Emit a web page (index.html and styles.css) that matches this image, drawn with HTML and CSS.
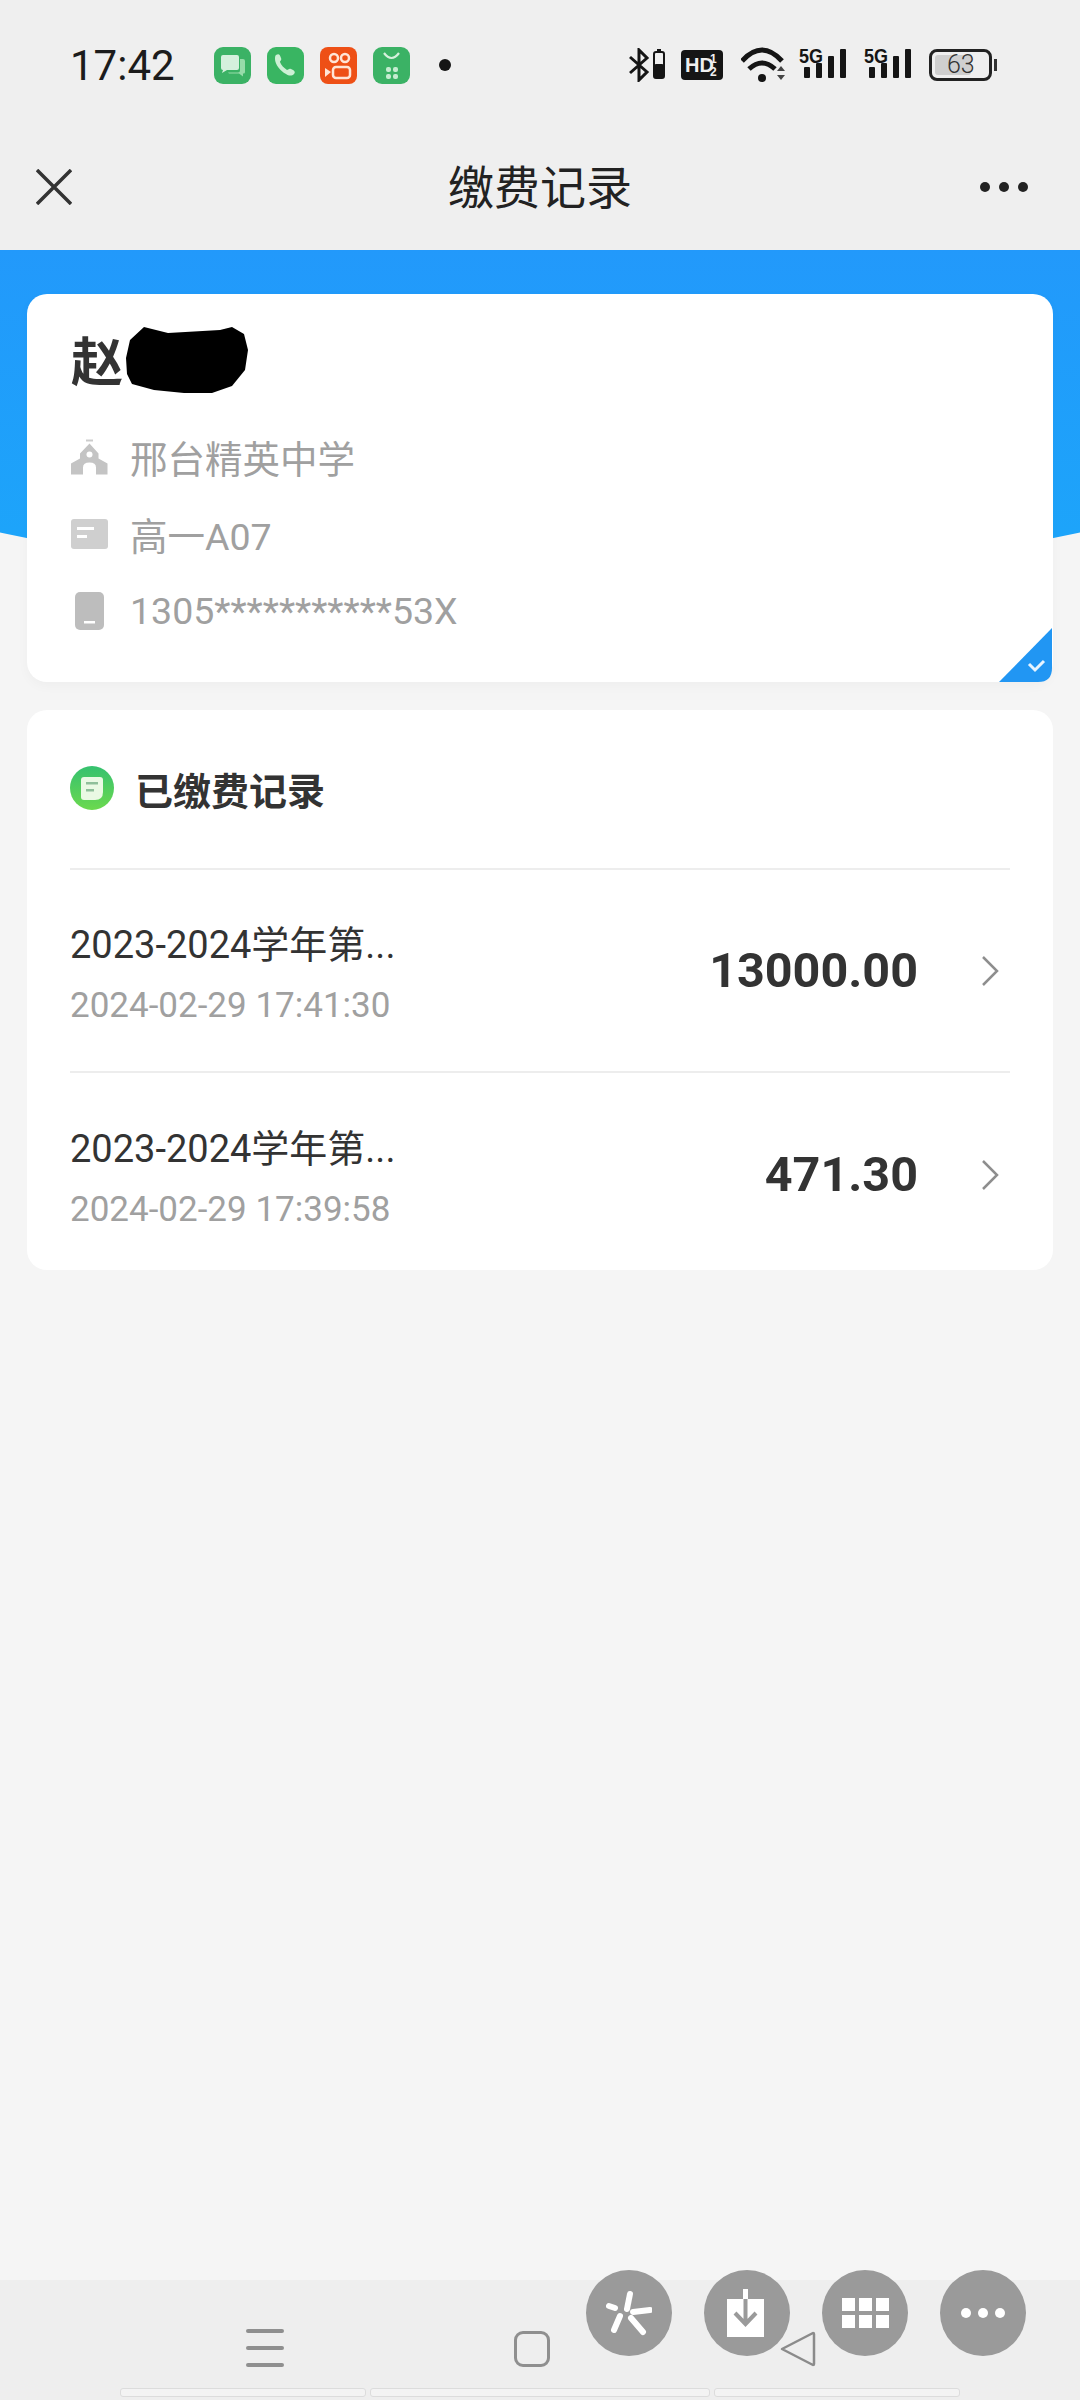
FILE: index.html
```html
<!DOCTYPE html>
<html lang="zh-CN">
<head>
  <meta charset="UTF-8">
  <meta name="viewport" content="width=device-width, initial-scale=1.0">
  <title>缴费记录</title>
  <link rel="stylesheet" href="styles.css">
</head>
<body>
  <div class="phone">
    <header class="topbar">
      <div class="status">
        <span class="time">17:42</span>
        <div class="apps">
          <svg class="app" viewBox="0 0 37 37"><rect width="37" height="37" rx="9" fill="#3bb265"/><path d="M7 10q0-2 2-2h14q2 0 2 2v11q0 2-2 2H13l-5 3 1-3q-2 0-2-2z" fill="#d5f0dc"/><path d="M26 12h3q2 0 2 2v11q0 2-2 1.500v3l-4-3H15l-1-1h10q2 0 2-2z" fill="#97dcaa"/></svg>
          <svg class="app" viewBox="0 0 37 37"><rect width="37" height="37" rx="9" fill="#39b562"/><path d="M9 8c3-2 4 0 5 3 1 2-1 3-1 4 1 3 4 6 7 8 1 0 2-2 4-1 3 1 5 3 3 5-2 2-5 2-8 0C13 24 8 17 8 12c0-2 0-3 1-4z" fill="#cdf0d5"/></svg>
          <svg class="app" viewBox="0 0 37 37"><rect width="37" height="37" rx="8" fill="#ee5016"/><g fill="none" stroke="#ffe5d6" stroke-width="2.500"><circle cx="14" cy="11" r="4"/><circle cx="25" cy="11" r="4"/><rect x="13" y="20" width="17" height="11" rx="3"/></g><path d="M5 21l6 4-6 5z" fill="#ffe5d6"/></svg>
          <svg class="app" viewBox="0 0 37 37"><rect width="37" height="37" rx="9" fill="#3bb265"/><path d="M11 6q7.500 10 15 0" fill="none" stroke="#d5f0dc" stroke-width="2.200"/><g fill="#c5ecd0"><rect x="13" y="20" width="5" height="5" rx="2"/><rect x="20" y="20" width="5" height="5" rx="2"/><rect x="13" y="27" width="5" height="5" rx="2"/><rect x="20" y="27" width="5" height="5" rx="2"/></g></svg>
          <span class="dot"></span>
        </div>
        <div class="sys">
          <svg width="36" height="34" viewBox="0 0 36 34"><path d="M1 9l17 15-8 8V2l8 8L1 25" fill="none" stroke="#151515" stroke-width="3"/><rect x="25" y="4" width="10" height="26" rx="2" fill="none" stroke="#151515" stroke-width="2"/><rect x="25" y="16" width="10" height="14" rx="2" fill="#151515"/><rect x="28" y="1" width="4" height="3" fill="#151515"/></svg>
          <svg class="hd" width="42" height="30" viewBox="0 0 42 30"><rect width="42" height="30" rx="4" fill="#151515"/><text x="4" y="22" class="hd-text">HD</text><text x="29" y="13" class="hd-small">1</text><text x="29" y="26" class="hd-small">2</text></svg>
          <svg class="wifi" width="46" height="36" viewBox="0 0 46 36"><g fill="none" stroke="#151515" stroke-width="5"><path d="M1 14q20-22 40 0"/><path d="M8 22q13-12 26 0"/></g><circle cx="21" cy="31" r="4" fill="#151515"/><path d="M36 24l4-5 4 5zM36 28l4 5 4-5z" fill="#444"/></svg>
          <svg width="48" height="42" viewBox="0 -4 48 42"><text x="0" y="15" class="sig-text" textLength="24" lengthAdjust="spacingAndGlyphs">5G</text><g fill="#151515"><rect x="5" y="19" width="6" height="11" rx="1"/><rect x="17" y="15" width="6" height="15" rx="1"/><rect x="29" y="8" width="6" height="22" rx="1"/><rect x="41" y="1" width="6" height="29" rx="1"/></g></svg>
          <svg class="sig2" width="48" height="42" viewBox="0 -4 48 42"><text x="0" y="15" class="sig-text" textLength="24" lengthAdjust="spacingAndGlyphs">5G</text><g fill="#151515"><rect x="5" y="19" width="6" height="11" rx="1"/><rect x="17" y="15" width="6" height="15" rx="1"/><rect x="29" y="8" width="6" height="22" rx="1"/><rect x="41" y="1" width="6" height="29" rx="1"/></g></svg>
          <div class="battery"><span class="level"></span><span class="pct">63</span></div>
          <span class="nib"></span>
        </div>
      </div>
      <nav class="titlebar">
        <svg class="close" viewBox="0 0 36 36"><path d="M1 1l34 34M35 1L1 35" stroke="#333" stroke-width="3.500" fill="none"/></svg>
        <h1>缴费记录</h1>
        <div class="more"><i></i><i></i><i></i></div>
      </nav>
    </header>

    <main class="content">
      <section class="card student">
        <div class="name-row">
          <span class="name">赵</span>
          <svg class="scribble" width="124" height="68" viewBox="0 0 124 68"><path d="M2 32L6 14 20 1 44 7 96 4 108 1 120 8 124 24 121 44 108 60 88 67 60 67 30 64 8 58 3 48z" fill="#000"/></svg>
        </div>
        <div class="info">
          <svg class="info-icon" viewBox="0 0 37 37"><path d="M15 1h7v2h-7z" fill="#ccc"/><path d="M18.500 5l9 10v5l9 5v11H25v-7q0-5-6.500-5T12 29v7H0V25l9-5v-5z" fill="#c4c4c4"/><circle cx="18.500" cy="16" r="3" fill="#fff"/></svg>
          <span>邢台精英中学</span>
        </div>
        <div class="info">
          <svg class="info-icon" viewBox="0 0 37 30"><rect width="37" height="30" rx="3" fill="#cfcfcf"/><rect x="6" y="8" width="17" height="3" fill="#fff"/><rect x="6" y="16" width="10" height="3" fill="#fff"/></svg>
          <span>高一A07</span>
        </div>
        <div class="info">
          <svg class="info-icon" viewBox="0 0 37 38"><rect x="4" y="0" width="29" height="38" rx="5" fill="#bdbdbd"/><rect x="13" y="29" width="11" height="2.500" fill="#fff"/></svg>
          <span>1305***********53X</span>
        </div>
        <svg class="verified" width="54" height="54" viewBox="0 0 54 54"><path d="M53 0v40q0 14-14 14H0z" fill="#2196f3"/><path d="M30 36l6 6 9-9" fill="none" stroke="#e6f4ff" stroke-width="3"/></svg>
      </section>

      <section class="card records">
        <div class="records-head">
          <svg class="head-icon" width="44" height="44" viewBox="0 0 44 44"><defs><linearGradient id="g" x1="0" y1="0" x2="0" y2="1"><stop offset="0" stop-color="#35c16f"/><stop offset="1" stop-color="#6bd94e"/></linearGradient></defs><circle cx="22" cy="22" r="22" fill="url(#g)"/><path d="M14 11h16q3 0 3 3v12q0 8-8 8H14q-3 0-3-3V14q0-3 3-3z" fill="#eaf9e4"/><rect x="16" y="16" width="12" height="2.500" fill="#8fbf9a"/><rect x="16" y="23" width="8" height="2.500" fill="#8fbf9a"/></svg>
          <h2>已缴费记录</h2>
        </div>
        <div class="row">
          <div class="row-text">
            <div class="row-title">2023-2024学年第...</div>
            <div class="row-date">2024-02-29 17:41:30</div>
          </div>
          <div class="amount">13000.00</div>
          <svg class="chevron" width="18" height="30" viewBox="0 0 18 30"><path d="M2 1l14 14L2 29" fill="none" stroke="#8e8e8e" stroke-width="2.500"/></svg>
        </div>
        <div class="row">
          <div class="row-text">
            <div class="row-title">2023-2024学年第...</div>
            <div class="row-date">2024-02-29 17:39:58</div>
          </div>
          <div class="amount">471.30</div>
          <svg class="chevron" width="18" height="30" viewBox="0 0 18 30"><path d="M2 1l14 14L2 29" fill="none" stroke="#8e8e8e" stroke-width="2.500"/></svg>
        </div>
      </section>
    </main>

    <footer class="bottom">
      <div class="softkeys">
        <div class="menu-key"><i></i><i></i><i></i></div>
        <span class="home-key"></span>
        <svg class="back-key" width="36" height="36" viewBox="0 0 36 36"><path d="M2 18L33 2q1 0 1 1v30q0 1-1 1z" fill="none" stroke="#8b8b8b" stroke-width="2.500" stroke-linejoin="round"/></svg>
      </div>
      <div class="tabs"><span class="tab t1"></span><span class="tab t2"></span><span class="tab t3"></span></div>

      <!-- floating tools sit over the soft keys -->
      <div class="tools">
        <span class="tool">
          <svg width="46" height="46" viewBox="0 0 46 46"><g stroke="#fff" stroke-linecap="round" fill="none"><path d="M21 19l3-15" stroke-width="6"/><path d="M27 22l17-2" stroke-width="6"/><path d="M3 16l6 2" stroke-width="6"/><path d="M14 26l-6 14" stroke-width="6"/><path d="M25 28l12 14" stroke-width="6"/></g></svg>
        </span>
        <span class="tool">
          <svg width="40" height="48" viewBox="0 0 40 48"><rect y="10" width="37" height="38" fill="#fff"/><path d="M16 0h5v12h-5z" fill="#fff"/><path d="M18.500 10v22M8 24l10.500 11L29 24" fill="none" stroke="#9a9a9a" stroke-width="4"/></svg>
        </span>
        <span class="tool">
          <div class="grid-icon"><i></i><i></i><i></i><i></i><i></i><i></i></div>
        </span>
        <span class="tool">
          <div class="tool-dots"><i></i><i></i><i></i></div>
        </span>
      </div>
    </footer>
  </div>
</body>
</html>
```

FILE: styles.css
```css
* {
  box-sizing: border-box;
}
body {
  margin: 0;
  font-family: Roboto, "Noto Sans CJK SC", sans-serif;
  color: #333;
}
.phone {
  width: 1080px;
  height: 2400px;
  display: flex;
  flex-direction: column;
  background: #f5f5f5;
  overflow: hidden;
}

/* top area */
.topbar {
  height: 250px;
  background: #efefef;
}
.status {
  height: 130px;
  display: flex;
  align-items: center;
  padding-left: 70px;
}
.time {
  font-size: 42px;
  color: #1c1c1c;
  width: 144px;
}
.apps {
  display: flex;
  align-items: center;
  gap: 16px;
}
.app {
  width: 37px;
  height: 37px;
}
.dot {
  width: 12px;
  height: 12px;
  border-radius: 50%;
  background: #151515;
  margin-left: 13px;
}
.sys {
  display: flex;
  align-items: center;
  margin-left: 178px;
}
.hd {
  margin-left: 16px;
}
.wifi {
  margin-left: 18px;
}
.wifi + svg {
  margin-left: 12px;
}
.sig2 {
  margin-left: 17px;
}
.hd-text {
  font: 700 20px "Liberation Sans", sans-serif;
  fill: #efefef;
}
.hd-small {
  font: 700 12px "Liberation Sans", sans-serif;
  fill: #efefef;
}
.sig-text {
  font: 700 20px "Liberation Sans", sans-serif;
  fill: #151515;
}
.battery {
  position: relative;
  width: 63px;
  height: 32px;
  margin-left: 17px;
  border: 3px solid #222;
  border-radius: 8px;
  padding: 3px;
  display: flex;
}
.level {
  width: 36px;
  background: #cfcfcf;
  border-radius: 3px;
}
.pct {
  position: absolute;
  left: 15px;
  top: -3px;
  font-size: 25px;
  line-height: 32px;
  font-weight: 300;
  color: #333;
}
.nib {
  width: 3px;
  height: 12px;
  margin-left: 2px;
  background: #333;
}
.titlebar {
  height: 120px;
  display: flex;
  align-items: center;
  justify-content: space-between;
  padding: 0 52px 6px 36px;
  position: relative;
}
.close {
  width: 36px;
  height: 36px;
}
.titlebar h1 {
  position: absolute;
  left: 0;
  right: 0;
  margin: 0 0 6px;
  text-align: center;
  font-size: 46px;
  font-weight: 400;
  color: #222;
}
.more {
  display: flex;
  gap: 9px;
}
.more i {
  width: 10px;
  height: 10px;
  border-radius: 50%;
  background: #222;
}

/* main */
.content {
  flex: 1;
  position: relative;
  padding: 44px 27px 0;
  display: flex;
  flex-direction: column;
  gap: 28px;
}
.content::before {
  content: "";
  position: absolute;
  left: -300px;
  top: 0;
  width: 1680px;
  height: 334px;
  border-radius: 0 0 50% 50% / 0 0 220px 220px;
  background: linear-gradient(to bottom, #2299fb, #1ca6fa);
}
.card {
  position: relative;
  background: #fff;
  border-radius: 20px;
}
.student {
  height: 388px;
  padding: 36px 44px 0;
  box-shadow: 0 4px 12px rgba(0, 0, 0, 0.03);
}
.name-row {
  display: flex;
  align-items: center;
  height: 68px;
  margin-bottom: 20px;
}
.name {
  font-size: 52px;
  font-weight: 700;
  line-height: 68px;
  color: #333;
}
.scribble {
  margin: 0 0 8px 1px;
}
.info {
  display: flex;
  align-items: center;
  height: 77px;
  font-size: 37.5px;
  color: #a0a0a0;
}
.info-icon {
  width: 37px;
  height: 38px;
  margin-right: 22px;
}
.verified {
  position: absolute;
  right: 0;
  bottom: 0;
}
.records {
  height: 560px;
  padding: 0 43px;
}
.records-head {
  height: 106px;
  margin-top: 54px;
  padding-bottom: 56px;
  display: flex;
  align-items: center;
  border-bottom: 2px solid #ededed;
}
.head-icon {
  margin-right: 21px;
}
.records-head h2 {
  margin: 0;
  font-size: 38px;
  font-weight: 700;
  color: #333;
}
.row {
  height: 203px;
  display: flex;
  align-items: center;
  border-bottom: 2px solid #ededed;
}
.row:last-child {
  border-bottom: none;
}
.row-text {
  flex: 1;
  margin-top: 8px;
}
.row-title {
  font-size: 38px;
  line-height: 48px;
  color: #333;
  margin-bottom: 14px;
}
.row-date {
  font-size: 35px;
  line-height: 46px;
  color: #a0a0a0;
}
.amount {
  font-size: 48.500px;
  font-weight: 700;
  color: #333;
}
.chevron {
  margin: 0 11px 0 63px;
}

/* bottom bar */
.bottom {
  position: relative;
  height: 120px;
  background: #eeeeee;
  display: flex;
  flex-direction: column;
}
.softkeys {
  height: 108px;
  display: flex;
  align-items: flex-end;
  padding: 0 0 21px 246px;
}
.menu-key {
  width: 38px;
  display: flex;
  flex-direction: column;
  gap: 13px;
}
.menu-key i {
  height: 4px;
  border-radius: 2px;
  background: #8f8f8f;
}
.home-key {
  width: 36px;
  height: 36px;
  margin-left: 230px;
  border: 3px solid #8f8f8f;
  border-radius: 9px;
}
.back-key {
  margin-left: 230px;
}
.tabs {
  display: flex;
  gap: 4px;
  padding-left: 120px;
}
.tab {
  height: 9px;
  background: #f3f3f3;
  border: 1px solid #dcdcdc;
  border-radius: 3px;
}
.t1 {
  width: 246px;
}
.t2 {
  width: 340px;
}
.t3 {
  width: 246px;
}
.tools {
  position: absolute;
  top: -10px;
  left: 586px;
  display: flex;
  gap: 32px;
}
.tool {
  width: 86px;
  height: 86px;
  border-radius: 50%;
  background: #9a9a9a;
  display: flex;
  align-items: center;
  justify-content: center;
}
.grid-icon {
  display: grid;
  grid-template-columns: repeat(3, 13px);
  grid-auto-rows: 13px;
  gap: 4px;
}
.grid-icon i {
  background: #fff;
}
.tool-dots {
  display: flex;
  gap: 7px;
}
.tool-dots i {
  width: 10px;
  height: 10px;
  border-radius: 50%;
  background: #fff;
}
```
